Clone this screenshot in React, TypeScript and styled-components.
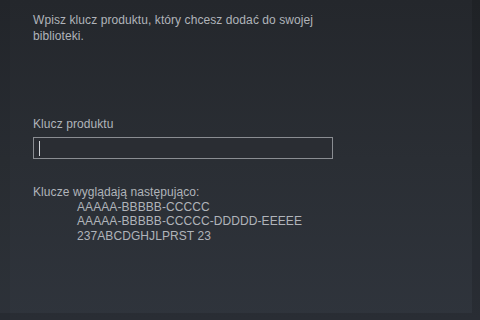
import React from "react";
import styled, { createGlobalStyle } from "styled-components";

const Global = createGlobalStyle`
  html, body { margin: 0; padding: 0; background: #23262b; }
  body { font-family: "Liberation Sans", Arial, sans-serif; }
`;

const Page = styled.div`
  width: 480px;
  height: 320px;
  box-sizing: border-box;
  background: linear-gradient(180deg, #24272c 0%, #2a2e34 50%, #2f343c 100%);
  box-shadow: inset -8px -7px 0 rgba(0, 0, 0, 0.12), inset 10px 0 0 rgba(0, 0, 0, 0.04);
  padding: 12px 0 0 33px;
  display: flex;
  flex-direction: column;
  color: #b0b4ba;
  font-size: 12px;
  line-height: 15px;
  letter-spacing: 0.08px;
`;

const Intro = styled.p`
  margin: 0;
  width: 295px;
  line-height: 16px;
`;

const FieldLabel = styled.label`
  display: block;
  margin-top: 73px;
  line-height: 15px;
`;

const KeyInput = styled.div`
  margin-top: 5px;
  width: 300px;
  height: 22px;
  box-sizing: border-box;
  border: 1px solid #8a8d92;
  background: #2a2d33;
  display: flex;
  align-items: center;
  padding-left: 5px;
`;

const Caret = styled.span`
  width: 1px;
  height: 15px;
  background: #d0d3d8;
`;

const Hint = styled.div`
  margin-top: 26px;
  line-height: 14.5px;
`;

const KeyList = styled.div`
  display: flex;
  flex-direction: column;
  padding-left: 44px;
  line-height: 14.5px;
`;

export default function App() {
  return (
    <>
      <Global />
      <Page>
        <Intro>Wpisz klucz produktu, który chcesz dodać do swojej biblioteki.</Intro>
        <FieldLabel>Klucz produktu</FieldLabel>
        <KeyInput>
          <Caret />
        </KeyInput>
        <Hint>Klucze wyglądają następująco:</Hint>
        <KeyList>
          <span>AAAAA-BBBBB-CCCCC</span>
          <span>AAAAA-BBBBB-CCCCC-DDDDD-EEEEE</span>
          <span>237ABCDGHJLPRST 23</span>
        </KeyList>
      </Page>
    </>
  );
}
